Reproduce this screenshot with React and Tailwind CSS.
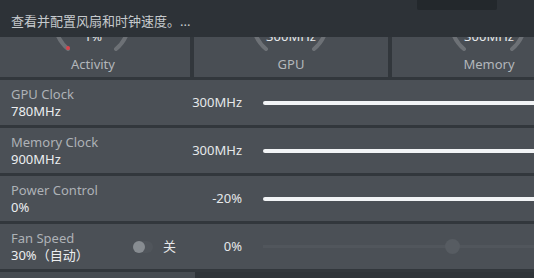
import React from 'react';

const font = { fontFamily: '"Segoe UI", "Noto Sans", "Noto Sans CJK SC", sans-serif' };

const gauges = [
  { value: '1%', label: 'Activity', dot: true },
  { value: '300MHz', label: 'GPU' },
  { value: '300MHz', label: 'Memory' },
];

function Gauge({ value, label, dot }) {
  return (
    <div className="relative w-[194px] h-[40px] shrink-0 bg-[#494e54] overflow-hidden">
      {/* arc, center sits above the card so only its lower ends show */}
      <svg className="absolute left-0 top-0" width="194" height="40" viewBox="0 0 194 40">
        <path
          d="M 62 -1 A 36 36 0 0 0 72 12"
          fill="none"
          stroke="rgba(255,255,255,0.2)"
          strokeWidth="4"
          strokeLinecap="round"
        />
        <path
          d="M 130 -1 A 36 36 0 0 1 120 12"
          fill="none"
          stroke="rgba(255,255,255,0.2)"
          strokeWidth="4"
          strokeLinecap="round"
        />
        {dot && <circle cx="72" cy="11" r="2" fill="#d9434b" />}
      </svg>
      <div className="relative flex flex-col items-center">
        <span className="-mt-[9px] text-[13px] leading-[16px] text-[#e6e8ea]">{value}</span>
        <span className="mt-[12px] text-[13px] leading-[16px] text-[#b3b7bb]">{label}</span>
      </div>
    </div>
  );
}

function Slider({ on }) {
  if (on) {
    return <div className="flex-1 h-[4px] rounded-l-full bg-[#f2f4f6]" />;
  }
  return (
    <div className="relative flex-1 h-[3px] bg-[#51565c]">
      <div className="absolute left-[182px] -top-[6px] w-[15px] h-[15px] rounded-full bg-[#575c62]" />
    </div>
  );
}

const rows = [
  { label: 'GPU Clock', value: '780MHz', offset: '300MHz', on: true },
  { label: 'Memory Clock', value: '900MHz', offset: '300MHz', on: true },
  { label: 'Power Control', value: '0%', offset: '-20%', on: true },
  { label: 'Fan Speed', value: '30%（自动）', offset: '0%', on: false, toggle: true },
];

export default function App() {
  return (
    <div className="w-[534px] h-[278px] bg-[#32373c] overflow-hidden flex flex-col" style={font}>
      {/* Header */}
      <div className="relative h-[37px] shrink-0 bg-[#2d3237] px-[11px] pt-[8px]">
        <div className="absolute left-[417px] top-0 w-[80px] h-[10px] rounded-b-[2px] bg-[#23282c]" />
        <span className="text-[13px] leading-[16px] text-[#c6cacd]">查看并配置风扇和时钟速度。...</span>
      </div>

      {/* Gauges */}
      <div className="flex gap-[4px] -ml-[4px] shrink-0">
        {gauges.map((g) => (
          <Gauge key={g.label} {...g} />
        ))}
      </div>

      {/* Tuning rows */}
      <div className="flex flex-col gap-[3px] mt-[3px]">
        {rows.map((r) => (
          <div key={r.label} className="flex items-center h-[45px] bg-[#4b5056] -mr-[10px]">
            <div className="w-[120px] pl-[11px] pt-[1px] flex flex-col shrink-0">
              <span className="text-[13px] leading-[17px] text-[#aeb2b6]">{r.label}</span>
              <span className="text-[13px] leading-[17px] text-[#eceef0]">{r.value}</span>
            </div>
            <div className="w-[60px] shrink-0 flex items-center gap-[10px] pl-[13px]">
              {r.toggle && (
                <>
                  <div className="w-[20px] h-[12px] rounded-full bg-[#50555b] flex items-center">
                    <div className="w-[12px] h-[12px] rounded-full bg-[#878c91]" />
                  </div>
                  <span className="text-[13px] text-[#e6e8ea]">关</span>
                </>
              )}
            </div>
            <div className="w-[62px] shrink-0 text-right text-[13px] text-[#e6e8ea]">{r.offset}</div>
            <div className="flex-1 flex ml-[21px]">
              <Slider on={r.on} />
            </div>
          </div>
        ))}
      </div>

      {/* Bottom strip */}
      <div className="flex mt-[3px] flex-1">
        <div className="w-[195px] bg-[#464b51]" />
        <div className="flex-1 bg-[#2f3439]" />
      </div>
    </div>
  );
}
